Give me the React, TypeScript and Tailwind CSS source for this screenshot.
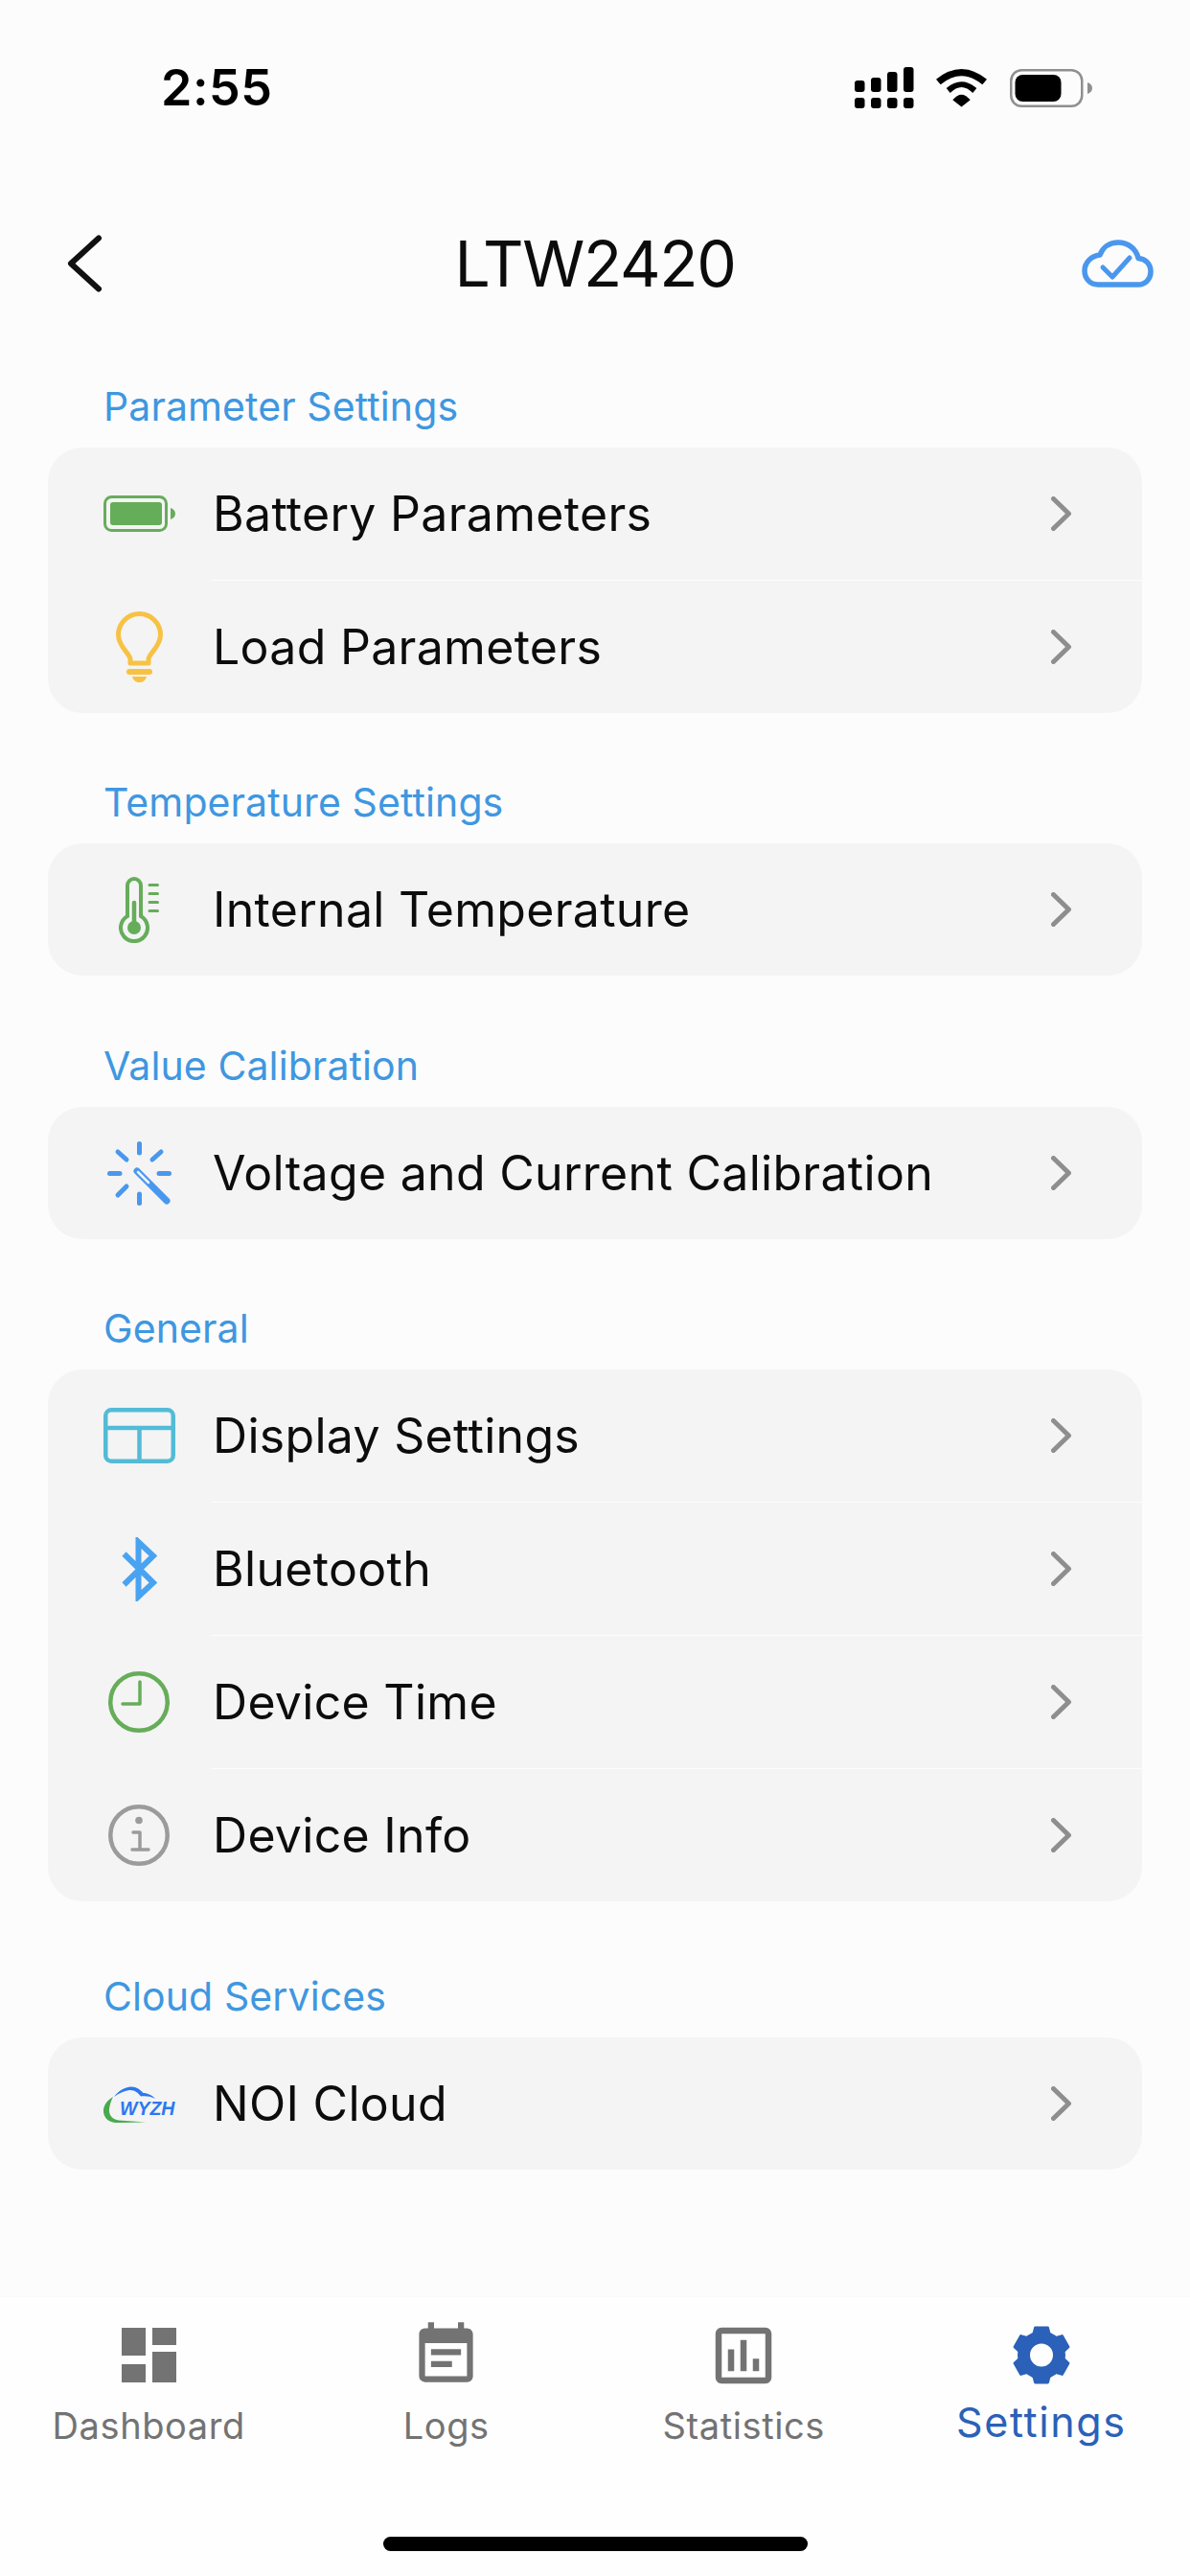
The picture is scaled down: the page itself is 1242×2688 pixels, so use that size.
import type { ReactNode } from "react";
import { MdEventNote, MdOutlineAssessment } from "react-icons/md";

const green = "#66ad5a";

function BatteryIcon() {
  return (
    <svg width="75" height="38" viewBox="0 0 75 38">
      <rect x="1.5" y="1.5" width="64" height="35" rx="7" fill="none" stroke={green} strokeWidth="3" />
      <rect x="7" y="7" width="54" height="24" rx="3" fill={green} />
      <path d="M70 13 C73 14 75 16 75 19 C75 22 73 24 70 25 Z" fill={green} />
    </svg>
  );
}

function BulbIcon() {
  return (
    <svg width="49" height="74" viewBox="0 0 49 74" fill="none">
      <path d="M15 54 V50 C15 44 2.5 37 2.5 24.5 A22 22 0 0 1 46.5 24.5 C46.5 37 34 44 34 50 V54 Z" stroke="#f7c244" strokeWidth="5" strokeLinejoin="round" />
      <rect x="11" y="60" width="27" height="6" rx="3" fill="#f7c244" />
      <path d="M17 68 H32 C31 72 28 74 24.5 74 C21 74 18 72 17 68 Z" fill="#f7c244" />
    </svg>
  );
}

function ThermoIcon() {
  return (
    <svg width="42" height="69" viewBox="0 0 42 69" fill="none" stroke={green}>
      <path d="M9 41 V9 A7 7 0 0 1 23 9 V41 A14 14 0 1 1 9 41 Z" strokeWidth="4" />
      <circle cx="16" cy="53" r="7" fill={green} stroke="none" />
      <path d="M16 27 V50" strokeWidth="4.5" strokeLinecap="round" />
      <path d="M32 8.5 H40.5 M32 17.5 H40.5 M32 26.5 H40.5 M32 35.5 H40.5" strokeWidth="3" strokeLinecap="round" />
    </svg>
  );
}

function WandIcon() {
  return (
    <svg width="67" height="67" viewBox="0 0 67 67" fill="none" stroke="#4a97ee" strokeLinecap="round">
      <path d="M33.5 2.5 V12 M33.5 55 V64.5 M2.5 33.5 H13 M54 33.5 H64.5 M11 11 L20 19 M56 11 L47 19 M11 56 L20 47" strokeWidth="5" />
      <path d="M31 31 L62 62" strokeWidth="7" />
      <path d="M32 32 L43 43" stroke="#f4f4f4" strokeWidth="2.5" />
    </svg>
  );
}

function DisplayIcon() {
  return (
    <svg width="75" height="58" viewBox="0 0 75 58" fill="none" stroke="#53bbd6" strokeWidth="4.5">
      <rect x="2.25" y="2.25" width="70.5" height="53.5" rx="6" />
      <path d="M2 21 H73 M37.5 21 V56" />
    </svg>
  );
}

function BluetoothIcon() {
  return (
    <svg width="37" height="67" viewBox="0 0 37 67" fill="none" stroke="#4aa3f0" strokeWidth="6">
      <path d="M2.5 17.5 L33 47.5 L17.5 62 V5 L33 19.5 L2.5 49.5" />
    </svg>
  );
}

function ClockIcon() {
  return (
    <svg width="64" height="64" viewBox="0 0 64 64" fill="none" stroke={green}>
      <circle cx="32" cy="32" r="29.75" strokeWidth="4.5" />
      <path d="M33 11 V34 H15" strokeWidth="3.5" strokeLinecap="round" strokeLinejoin="round" />
    </svg>
  );
}

function InfoIcon() {
  return (
    <svg width="64" height="64" viewBox="0 0 64 64" fill="none" stroke="#9b9b9b">
      <circle cx="32" cy="32" r="29.75" strokeWidth="4.5" />
      <circle cx="32" cy="16.5" r="3.8" fill="#9b9b9b" stroke="none" />
      <path d="M26 29 H33 V47 M25 47 H42" strokeWidth="3.5" strokeLinecap="round" strokeLinejoin="round" />
    </svg>
  );
}

function WyzhLogo() {
  return (
    <svg width="75" height="39" viewBox="0 0 75 39" fill="none">
      <path d="M10 12 C3 16 -0.5 22 0 28 C1 36 8 39.5 16 39 L44 38.5 L16 36.5 C9 35.5 5.5 31 6 25 C6.5 20 8 16 10 12 Z" fill="#4aa84e" />
      <path d="M11 12 C15 6.5 21 2.5 28 1.5 C34 1 38.5 4.5 41.5 8 C46 8 51 10.5 54 14 C49 11.5 44 11 39 11.5 C36 7.5 32 4.5 27 5 C21 6 16 8.5 11 12 Z" fill="#2b78f0" />
      <text x="17" y="31" fontFamily="Liberation Sans, sans-serif" fontSize="19.5" fontWeight="700" fontStyle="italic" fill="#2b78f0">WYZH</text>
    </svg>
  );
}

function DashboardIcon() {
  return (
    <svg width="57" height="57" viewBox="0 0 57 57" fill="#737373">
      <rect x="0" y="0" width="25" height="29" />
      <rect x="0" y="38" width="25" height="19" />
      <rect x="32" y="0" width="25" height="18" />
      <rect x="32" y="25" width="25" height="32" />
    </svg>
  );
}

function GearIcon() {
  return (
    <svg width="60" height="61" viewBox="0 0 60 61" fill="none">
      <circle cx="30" cy="30.5" r="18.5" stroke="#2b61b8" strokeWidth="13" />
      {[0, 60, 120, 180, 240, 300].map((a) => (
        <path
          key={a}
          transform={`rotate(${a} 30 30.5)`}
          d="M23.5 2 H36.5 L39 12 H21 Z"
          fill="#2b61b8"
          stroke="#2b61b8"
          strokeWidth="3"
          strokeLinejoin="round"
        />
      ))}
    </svg>
  );
}

function Chevron() {
  return (
    <svg width="22" height="36" viewBox="0 0 22 36" fill="none" className="mr-[73px] shrink-0">
      <path d="M2.5 2.5 L18.5 18 L2.5 33.5" stroke="#8e8e8e" strokeWidth="5" strokeLinecap="round" strokeLinejoin="round" />
    </svg>
  );
}

function Row({ icon, label, last }: { icon: ReactNode; label: string; last?: boolean }) {
  return (
    <>
      <div className="flex h-[138px] items-center">
        <div className="flex w-[190px] shrink-0 justify-center">{icon}</div>
        <span className="-ml-[18px] flex-1 text-[50px] leading-none tracking-[0.3px] text-[#0c0c0c]">{label}</span>
        <Chevron />
      </div>
      {!last && <div className="ml-[171px] h-px bg-[#fdfdfd]" />}
    </>
  );
}

function Section({ title, className, children }: { title: string; className?: string; children: ReactNode }) {
  return (
    <section className={className}>
      <div className="mb-4 flex h-[56px] items-center pl-[58px] pt-[3px] text-[41px] tracking-[0.1px] text-[#3f97e0]">{title}</div>
      <div className="overflow-hidden rounded-[36px] bg-[#f4f4f4]">{children}</div>
    </section>
  );
}

function Tab({ icon, label, active }: { icon: ReactNode; label: string; active?: boolean }) {
  return (
    <div className="flex flex-col items-center">
      <div className="flex h-[75px] items-center justify-center">{icon}</div>
      <div
        className={
          active
            ? "mt-[7px] flex h-[50px] items-center text-[43px] tracking-[1.6px] text-[#2b61b8]"
            : "mt-[11px] flex h-[50px] items-center text-[38px] tracking-[0.6px] text-[#737373]"
        }
      >
        {label}
      </div>
    </div>
  );
}

export default function App() {
  return (
    <div className="flex h-[2688px] w-[1242px] flex-col bg-[#fcfcfc] font-['Inter',sans-serif]">
      <div className="flex h-[180px] items-start justify-between pl-[168px] pr-[102px] pt-[62px]">
        <span className="text-[52px] leading-[60px] font-semibold tracking-[0.01em] text-black">2:55</span>
        <div className="mt-[8px] flex items-center">
          <svg width="62" height="43" viewBox="0 0 62 43" fill="#000">
            <rect x="0" y="14" width="10.5" height="12" rx="3" />
            <rect x="17" y="11" width="10.5" height="15" rx="3" />
            <rect x="34" y="5" width="10.5" height="21" rx="3" />
            <rect x="51" y="0" width="10.5" height="26" rx="3" />
            <rect x="0" y="32" width="10.5" height="11" rx="3" />
            <rect x="17" y="32" width="10.5" height="11" rx="3" />
            <rect x="34" y="32" width="10.5" height="11" rx="3" />
            <rect x="51" y="32" width="10.5" height="11" rx="3" />
          </svg>
          <svg width="53" height="40" viewBox="0 0 53 40" fill="#000" className="ml-[23px]">
            <path d="M0 10.7 Q26.5 -10.7 53 10.7 L48.3 16.3 Q26.5 -1.7 4.7 16.3 Z" />
            <path d="M10.7 20 Q26.5 6.6 42.3 20 L38.3 25 Q26.5 13 14.7 25 Z" />
            <path d="M17.3 32.3 Q26.5 21 35.7 32.3 L26.5 39.5 Z" />
          </svg>
          <svg width="86" height="40" viewBox="0 0 86 40" fill="none" className="ml-[24px]">
            <rect x="1.25" y="1.25" width="74" height="37.5" rx="11" stroke="#8f8f8f" strokeWidth="2.5" />
            <rect x="5.5" y="6" width="48" height="28" rx="8" fill="#000" />
            <path d="M81 14 C84 15 86 17 86 20 C86 23 84 25 81 26 Z" fill="#8f8f8f" />
          </svg>
        </div>
      </div>

      <div className="grid h-[190px] grid-cols-[1fr_auto_1fr] items-center px-[38px]">
        <svg width="38" height="60" viewBox="0 0 38 60" fill="none" className="ml-[31px]">
          <path d="M34 3.5 L5 30 L34 56.5" stroke="#111" strokeWidth="6" strokeLinecap="round" strokeLinejoin="round" />
        </svg>
        <span className="text-[66px] leading-none tracking-[-1.3px] text-[#0c0c0c]">LTW2420</span>
        <svg width="75" height="50" viewBox="0 0 75 50" fill="none" stroke="#4a97ee" strokeLinecap="round" strokeLinejoin="round" className="justify-self-end">
          <path d="M17 47 H59 C66.5 47 72 41 72 33.5 C72 25.5 66.5 20 59 19.5 C57 9.5 48 3 38 3 C29 3 22 8 19 16 C10 17 3 24 3 32.5 C3 41 9 47 17 47 Z" strokeWidth="5.5" />
          <path d="M22 29 L32 39 L50 19" strokeWidth="5" />
        </svg>
      </div>

      <main className="mt-[25px] flex-1 px-[50px]">
        <Section title="Parameter Settings">
          <Row icon={<BatteryIcon />} label="Battery Parameters" />
          <Row icon={<BulbIcon />} label="Load Parameters" last />
        </Section>
        <Section title="Temperature Settings" className="mt-[64px]">
          <Row icon={<ThermoIcon />} label="Internal Temperature" last />
        </Section>
        <Section title="Value Calibration" className="mt-[65px]">
          <Row icon={<WandIcon />} label="Voltage and Current Calibration" last />
        </Section>
        <Section title="General" className="mt-[64px]">
          <Row icon={<DisplayIcon />} label="Display Settings" />
          <Row icon={<BluetoothIcon />} label="Bluetooth" />
          <Row icon={<ClockIcon />} label="Device Time" />
          <Row icon={<InfoIcon />} label="Device Info" last />
        </Section>
        <Section title="Cloud Services" className="mt-[70px]">
          <Row icon={<WyzhLogo />} label="NOI Cloud" last />
        </Section>
      </main>

      <div className="border-t border-[#f9f9f9] bg-[#fefefe] pt-[23px]">
        <div className="grid grid-cols-4">
          <Tab icon={<DashboardIcon />} label="Dashboard" />
          <Tab icon={<MdEventNote size={75} color="#737373" />} label="Logs" />
          <Tab icon={<MdOutlineAssessment size={78} color="#737373" />} label="Statistics" />
          <Tab icon={<GearIcon />} label="Settings" active />
        </div>
        <div className="mx-auto mb-[26px] mt-[91px] h-[15px] w-[443px] rounded-full bg-black" />
      </div>
    </div>
  );
}
